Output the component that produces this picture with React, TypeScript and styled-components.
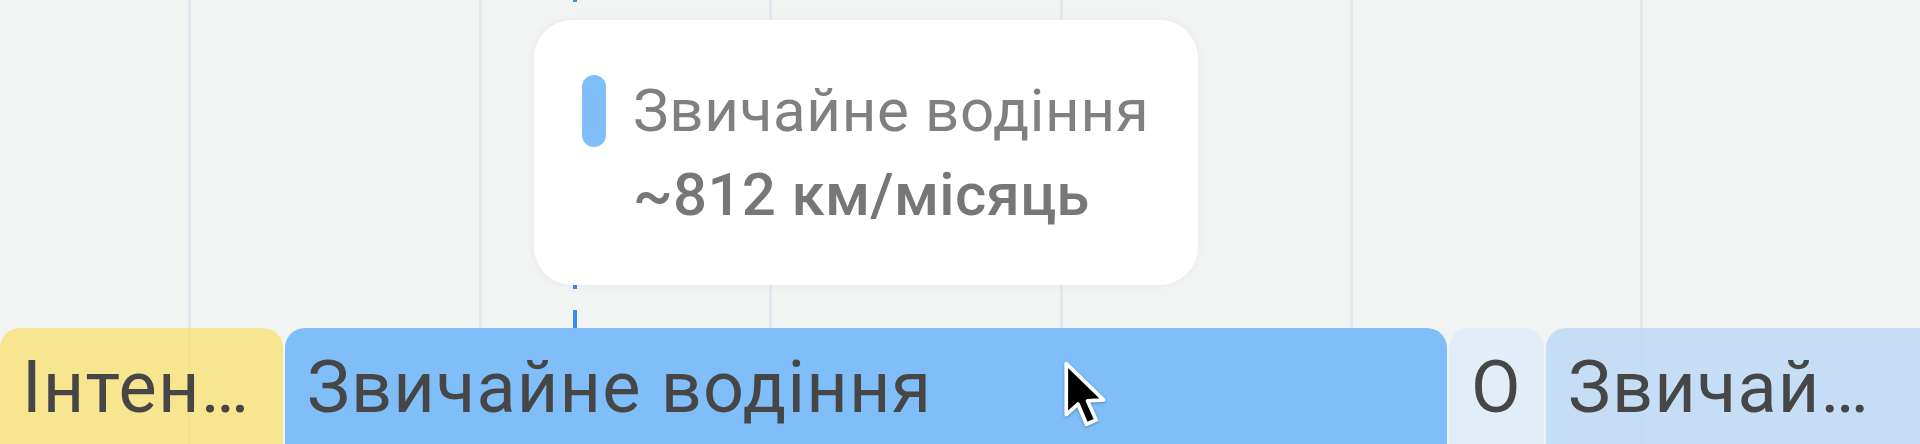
import React from 'react';
import styled, { createGlobalStyle } from 'styled-components';

const GlobalStyle = createGlobalStyle`
  html, body {
    margin: 0;
    padding: 0;
    background: #f2f4f3;
    overflow: hidden;
  }
  * {
    box-sizing: border-box;
  }
`;

const Timeline = styled.div`
  position: relative;
  width: 1920px;
  height: 444px;
  overflow: hidden;
  display: flex;
  flex-direction: column;
  font-family: Roboto, 'Noto Sans', sans-serif;
  background-color: #f2f4f3;
  background-image: repeating-linear-gradient(
    to right,
    transparent 0,
    transparent 287.4px,
    #e5e9f0 287.4px,
    #e5e9f0 290.4px
  );
  background-position: -99px 0;
`;

const Plot = styled.div`
  height: 328px;
  flex-shrink: 0;
`;

const Track = styled.div`
  display: flex;
  gap: 2px;
  height: 130px;
`;

const Segment = styled.div<{ $width: number; $bg: string; $padRight?: number }>`
  flex: 0 0 ${({ $width }) => $width}px;
  height: 100%;
  background: ${({ $bg }) => $bg};
  border-radius: 20px 20px 0 0;
  padding: 18px ${({ $padRight }) => $padRight ?? 20}px 0 22px;
  font-size: 72px;
  line-height: 84px;
  letter-spacing: 1.2px;
  color: #464646;
  white-space: nowrap;
  overflow: hidden;
  text-overflow: ellipsis;
`;

const HoverLine = styled.div`
  position: absolute;
  left: 573px;
  top: 0;
  width: 4px;
  height: 328px;
  background-image: repeating-linear-gradient(
    to bottom,
    #3a8cf0 0,
    #3a8cf0 20px,
    transparent 20px,
    transparent 41px
  );
  background-position: 0 -18px;
`;

const Tooltip = styled.div`
  position: absolute;
  left: 534px;
  top: 20px;
  width: 664px;
  height: 265px;
  padding: 55px 30px 0 48px;
  background: #ffffff;
  border-radius: 38px;
  box-shadow: 0 0 10px rgba(0, 0, 0, 0.05);
`;

const TooltipHead = styled.div`
  display: flex;
  align-items: center;
  gap: 27px;
`;

const Swatch = styled.span<{ $color: string }>`
  flex: 0 0 24px;
  height: 72px;
  border-radius: 12px;
  background: ${({ $color }) => $color};
`;

const TooltipTitle = styled.span`
  font-size: 60px;
  line-height: 72px;
  letter-spacing: 0.7px;
  color: #808080;
  white-space: nowrap;
`;

const TooltipValue = styled.div`
  margin: 12px 0 0 51px;
  font-size: 60px;
  line-height: 72px;
  font-weight: 500;
  letter-spacing: 0.3px;
  color: #777777;
  white-space: nowrap;
`;

const Pointer = styled.svg`
  position: absolute;
  left: 1062px;
  top: 359px;
  width: 49px;
  height: 71px;
  filter: drop-shadow(0 1px 1.5px rgba(0, 0, 0, 0.3));
`;

const segments = [
  { label: 'Інтенсивне водіння', width: 283, bg: 'rgba(248, 225, 118, 0.8)' },
  { label: 'Звичайне водіння', width: 1162, bg: '#7fbef9' },
  { label: 'О', width: 95, bg: 'rgba(221, 235, 249, 0.8)' },
  { label: 'Звичайне водіння', width: 400, bg: 'rgba(186, 215, 246, 0.8)', padRight: 46 },
];

export default function App() {
  return (
    <>
      <GlobalStyle />
      <Timeline>
        <Plot />
        <Track>
          {segments.map((s, i) => (
            <Segment key={i} $width={s.width} $bg={s.bg} $padRight={s.padRight}>
              {s.label}
            </Segment>
          ))}
        </Track>

        <HoverLine />

        <Tooltip>
          <TooltipHead>
            <Swatch $color="#7fbef9" />
            <TooltipTitle>Звичайне водіння</TooltipTitle>
          </TooltipHead>
          <TooltipValue>~812 км/місяць</TooltipValue>
        </Tooltip>

        <Pointer viewBox="-4 -4 46 66">
          <path
            d="M0 0 L0 48 L11 38 L19 57 L28 53 L20 35 L35 34 Z"
            fill="#000"
            stroke="#fff"
            strokeWidth="3.5"
            strokeLinejoin="round"
          />
        </Pointer>
      </Timeline>
    </>
  );
}
